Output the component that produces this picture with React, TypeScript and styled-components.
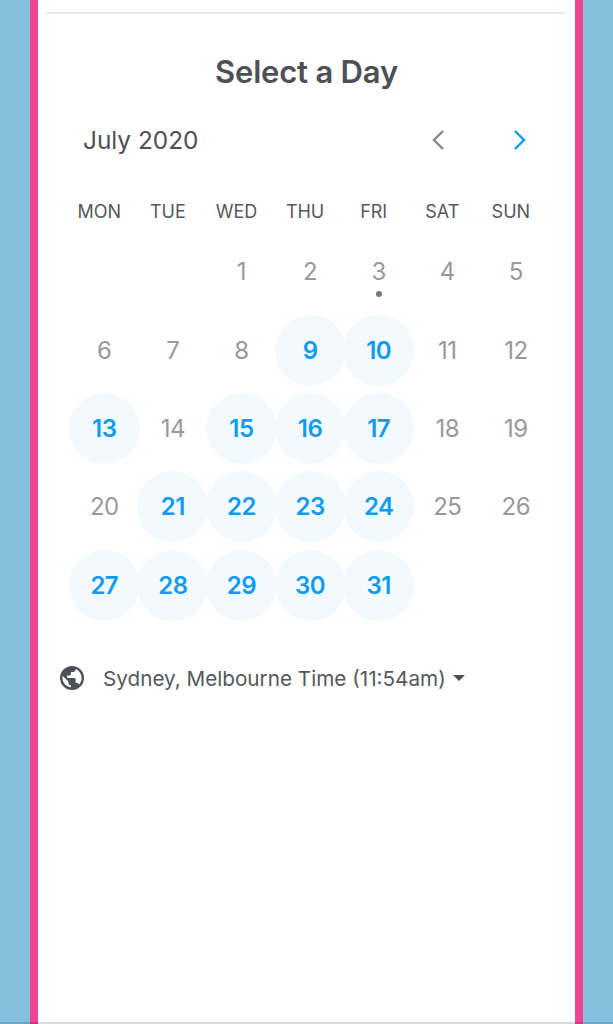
import React, {FC} from 'react';
import styled, {createGlobalStyle} from 'styled-components';

const GlobalStyle = createGlobalStyle`
  html, body {
    margin: 0;
    padding: 0;
    background: #85c1de;
  }
  * {
    box-sizing: border-box;
  }
`

const Page = styled.div`
  width: 613px;
  height: 1024px;
  padding: 0 30px;
  background: #85c1de;
  font-family: Inter, "Liberation Sans", sans-serif;
  overflow: hidden;
`

const Frame = styled.div`
  height: 1024px;
  border-left: 8px solid #ef4493;
  border-right: 8px solid #ef4493;
  background: #fff;
  padding: 12px 8px 0;
`

const Divider = styled.div`
  height: 1.5px;
  background: #e9ecef;
`

const Title = styled.h1`
  margin: 40px 0 0;
  font-size: 31px;
  line-height: 36px;
  font-weight: 600;
  letter-spacing: -.2px;
  text-align: center;
  color: #4d5055;
`

const MonthBar = styled.div`
  display: flex;
  align-items: center;
  height: 30px;
  margin-top: 35px;
  padding: 0 39px 0 37px;
`

const MonthName = styled.div`
  flex: 1;
  font-size: 24.4px;
  color: #4d5055;
`

const Arrows = styled.div`
  display: flex;
  gap: 66.5px;
`

const Arrow = styled.svg<{$active?: boolean}>`
  display: block;
  width: 16px;
  height: 22px;
  fill: none;
  stroke: ${p => (p.$active ? '#0f9bf2' : '#84878a')};
  stroke-width: 2.4;
`

const WeekRow = styled.div`
  display: grid;
  grid-template-columns: repeat(7, 68.6px);
  margin: 46px 0 0 19px;
`

const WeekLabel = styled.div`
  font-size: 18px;
  line-height: 22px;
  text-align: center;
  color: #55585c;
`

const DayGrid = styled.div`
  display: grid;
  grid-template-columns: repeat(7, 68.6px);
  grid-auto-rows: 78.4px;
  margin: 10px 0 0 24px;
`

const DayCell = styled.div`
  position: relative;
  display: flex;
  align-items: center;
  justify-content: center;
`

const DayNumber = styled.div<{$open?: boolean}>`
  display: flex;
  align-items: center;
  justify-content: center;
  width: 71px;
  height: 71px;
  flex: none;
  border-radius: 50%;
  font-size: 24px;
  font-weight: ${p => (p.$open ? 600 : 400)};
  letter-spacing: -.5px;
  color: ${p => (p.$open ? '#0f9bf2' : '#98999b')};
  background: ${p => (p.$open ? '#f2faff' : 'transparent')};
`

const TodayDot = styled.span`
  position: absolute;
  left: 50%;
  top: 58px;
  width: 6px;
  height: 6px;
  margin-left: -3px;
  border-radius: 50%;
  background: #75787b;
`

const ZoneRow = styled.div`
  display: flex;
  align-items: center;
  margin: 39px 0 0 14px;
  height: 30px;
  font-size: 20.7px;
  color: #55585c;
`

const Globe = styled.svg`
  width: 24px;
  height: 24px;
  margin-right: 19px;
  fill: #4d5055;
`

const Caret = styled.span`
  width: 0;
  height: 0;
  margin-left: 7px;
  border-left: 6.5px solid transparent;
  border-right: 6.5px solid transparent;
  border-top: 6.5px solid #4d5055;
`

const FootLine = styled.div`
  position: fixed;
  left: 0;
  right: 0;
  bottom: 0;
  height: 2px;
  background: rgba(0, 0, 0, .15);
`

const weekDays = ['MON', 'TUE', 'WED', 'THU', 'FRI', 'SAT', 'SUN']
const openDays = [9, 10, 13, 15, 16, 17, 21, 22, 23, 24, 27, 28, 29, 30, 31]
const days = Array.from({length: 31}, (_, i) => i + 1)

const App: FC = () => {
    return (
        <Page>
            <GlobalStyle/>
            <Frame>
                <Divider/>
                <Title>Select a Day</Title>
                <MonthBar>
                    <MonthName>July 2020</MonthName>
                    <Arrows>
                        <Arrow viewBox="0 0 16 22"><path d="M13 2 4 11l9 9"/></Arrow>
                        <Arrow $active viewBox="0 0 16 22"><path d="m3 2 9 9-9 9"/></Arrow>
                    </Arrows>
                </MonthBar>
                <WeekRow>
                    {weekDays.map(day => <WeekLabel key={day}>{day}</WeekLabel>)}
                </WeekRow>
                <DayGrid>
                    <DayCell/>
                    <DayCell/>
                    {days.map(day =>
                        <DayCell key={day}>
                            <DayNumber $open={openDays.includes(day)}>{day}</DayNumber>
                            {day === 3 && <TodayDot/>}
                        </DayCell>
                    )}
                </DayGrid>
                <ZoneRow>
                    <Globe viewBox="0 0 24 24">
                        <path d="M12 0a12 12 0 1 0 0 24 12 12 0 0 0 0-24Zm-1.2 21.5A9.6 9.6 0 0 1 2.4 12c0-.7.1-1.4.3-2.1L8.4 15.6v1.2c0 1.3 1.1 2.4 2.4 2.4v2.3Zm8.3-3.1a2.4 2.4 0 0 0-2.3-1.6h-1.2v-3.6c0-.7-.5-1.2-1.2-1.2H7.2V9.6h2.4c.7 0 1.2-.5 1.2-1.2V6h2.4c1.3 0 2.4-1.1 2.4-2.4v-.5a9.6 9.6 0 0 1 3.5 15.3Z"/>
                    </Globe>
                    Sydney, Melbourne Time (11:54am)
                    <Caret/>
                </ZoneRow>
            </Frame>
            <FootLine/>
        </Page>
    );
};

export default App;
